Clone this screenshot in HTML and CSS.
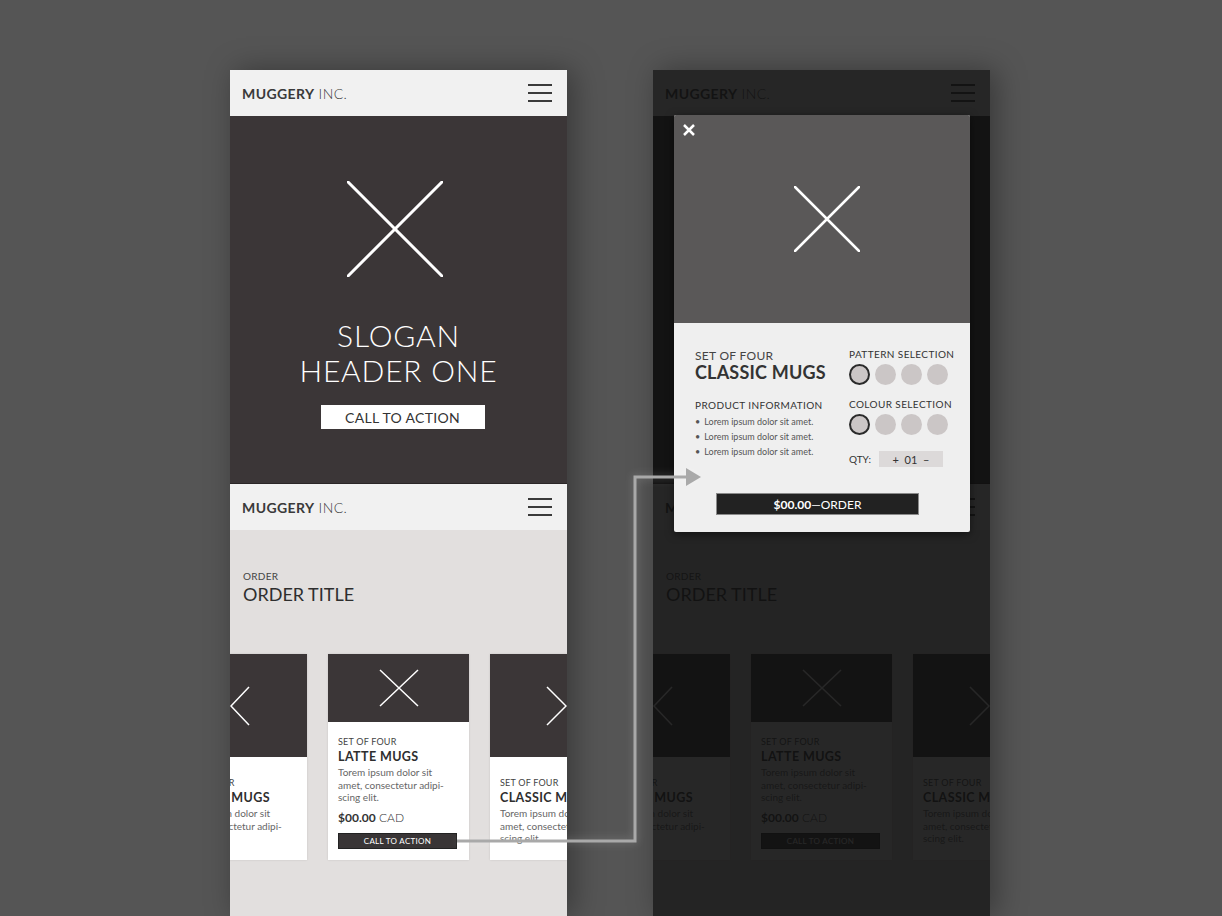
FILE: index.html
```html
<!DOCTYPE html>
<html lang="en">
<head>
  <meta charset="UTF-8" />
  <meta name="viewport" content="width=device-width, initial-scale=1.0"/>
  <title>Muggery Inc. Wireframes</title>
  <link rel="stylesheet" href="styles.css">
</head>
<body>

<div class="board">

  <!-- left screen -->
  <div class="phone">
    <div class="topbar">
      <div class="logo"><b>MUGGERY</b> INC.</div>
      <div class="burger"><span></span><span></span><span></span></div>
    </div>
    <div class="hero">
      <svg class="hero-x" width="96" height="96" viewBox="0 0 96 96"><path d="M1 1L95 95M95 1L1 95" stroke="#fff" stroke-width="3" stroke-linecap="round"/></svg>
      <h1 class="slogan">SLOGAN<br>HEADER ONE</h1>
      <div class="hero-btn">CALL TO ACTION</div>
    </div>
    <div class="topbar">
      <div class="logo"><b>MUGGERY</b> INC.</div>
      <div class="burger"><span></span><span></span><span></span></div>
    </div>
    <div class="order">
      <div class="eyebrow">ORDER</div>
      <div class="order-title">ORDER TITLE</div>
      <div class="cards">
        <div class="card side">
          <div class="card-img prev">
            <svg width="20" height="40" viewBox="0 0 20 40"><path d="M19 1L1 20L19 39" fill="none" stroke="#fff" stroke-width="1.5"/></svg>
          </div>
          <div class="card-body">
            <div class="kicker">SET OF FOUR</div>
            <div class="card-title">CLASSIC MUGS</div>
            <p class="card-text">Torem ipsum dolor sit amet, consectetur adipi-</p>
          </div>
        </div>
        <div class="card">
          <div class="card-img main">
            <svg width="40" height="38" viewBox="0 0 40 38"><path d="M1 1L39 37M39 1L1 37" stroke="#fff" stroke-width="1.5"/></svg>
          </div>
          <div class="card-body">
            <div class="kicker">SET OF FOUR</div>
            <div class="card-title">LATTE MUGS</div>
            <p class="card-text">Torem ipsum dolor sit amet, consectetur adipi-scing elit.</p>
            <div class="price"><b>$00.00</b> CAD</div>
            <div class="card-btn">CALL TO ACTION</div>
          </div>
        </div>
        <div class="card side">
          <div class="card-img next">
            <svg width="22" height="40" viewBox="0 0 22 40"><path d="M1 1L20 20L1 39" fill="none" stroke="#fff" stroke-width="1.5"/></svg>
          </div>
          <div class="card-body">
            <div class="kicker">SET OF FOUR</div>
            <div class="card-title">CLASSIC MUGS</div>
            <p class="card-text">Torem ipsum dolor sit amet, consectetur adipi-scing elit.</p>
          </div>
        </div>
      </div>
    </div>
  </div>

  <!-- right screen, same page dimmed with the product modal open -->
  <div class="phone dimmed">
    <div class="topbar">
      <div class="logo"><b>MUGGERY</b> INC.</div>
      <div class="burger"><span></span><span></span><span></span></div>
    </div>
    <div class="hero">
      <svg class="hero-x" width="96" height="96" viewBox="0 0 96 96"><path d="M1 1L95 95M95 1L1 95" stroke="#fff" stroke-width="3" stroke-linecap="round"/></svg>
      <h1 class="slogan">SLOGAN<br>HEADER ONE</h1>
      <div class="hero-btn">CALL TO ACTION</div>
    </div>
    <div class="topbar">
      <div class="logo"><b>MUGGERY</b> INC.</div>
      <div class="burger"><span></span><span></span><span></span></div>
    </div>
    <div class="order">
      <div class="eyebrow">ORDER</div>
      <div class="order-title">ORDER TITLE</div>
      <div class="cards">
        <div class="card side">
          <div class="card-img prev">
            <svg width="20" height="40" viewBox="0 0 20 40"><path d="M19 1L1 20L19 39" fill="none" stroke="#fff" stroke-width="1.5"/></svg>
          </div>
          <div class="card-body">
            <div class="kicker">SET OF FOUR</div>
            <div class="card-title">CLASSIC MUGS</div>
            <p class="card-text">Torem ipsum dolor sit amet, consectetur adipi-</p>
          </div>
        </div>
        <div class="card">
          <div class="card-img main">
            <svg width="40" height="38" viewBox="0 0 40 38"><path d="M1 1L39 37M39 1L1 37" stroke="#fff" stroke-width="1.5"/></svg>
          </div>
          <div class="card-body">
            <div class="kicker">SET OF FOUR</div>
            <div class="card-title">LATTE MUGS</div>
            <p class="card-text">Torem ipsum dolor sit amet, consectetur adipi-scing elit.</p>
            <div class="price"><b>$00.00</b> CAD</div>
            <div class="card-btn">CALL TO ACTION</div>
          </div>
        </div>
        <div class="card side">
          <div class="card-img next">
            <svg width="22" height="40" viewBox="0 0 22 40"><path d="M1 1L20 20L1 39" fill="none" stroke="#fff" stroke-width="1.5"/></svg>
          </div>
          <div class="card-body">
            <div class="kicker">SET OF FOUR</div>
            <div class="card-title">CLASSIC MUGS</div>
            <p class="card-text">Torem ipsum dolor sit amet, consectetur adipi-scing elit.</p>
          </div>
        </div>
      </div>
    </div>

    <div class="shade"></div>

    <div class="modal">
      <div class="modal-img">
        <svg class="close" width="14" height="14" viewBox="0 0 14 14"><path d="M2 2L12 12M12 2L2 12" stroke="#fff" stroke-width="2.5"/></svg>
        <svg class="modal-x" width="66" height="66" viewBox="0 0 66 66"><path d="M1 1L65 65M65 1L1 65" stroke="#fff" stroke-width="2.5" stroke-linecap="round"/></svg>
      </div>
      <div class="modal-info">
        <div class="info-left">
          <div class="m-kicker">SET OF FOUR</div>
          <div class="m-title">CLASSIC MUGS</div>
          <div class="m-label">PRODUCT INFORMATION</div>
          <ul class="m-list">
            <li>Lorem ipsum dolor sit amet.</li>
            <li>Lorem ipsum dolor sit amet.</li>
            <li>Lorem ipsum dolor sit amet.</li>
          </ul>
        </div>
        <div class="info-right">
          <div class="m-label">PATTERN SELECTION</div>
          <div class="swatches">
            <span class="on"></span><span></span><span></span><span></span>
          </div>
          <div class="m-label">COLOUR SELECTION</div>
          <div class="swatches">
            <span class="on"></span><span></span><span></span><span></span>
          </div>
          <div class="qty">QTY: <span class="qty-box">+&nbsp; 01 &nbsp;–</span></div>
        </div>
        <div class="order-btn"><b>$00.00</b>—ORDER</div>
      </div>
    </div>
  </div>

  <svg class="flow" width="1222" height="916" viewBox="0 0 1222 916">
    <path d="M457 841H635V477H687" fill="none" stroke="#a9a9a9" stroke-width="3"/>
    <path d="M686 468L701 477L686 486Z" fill="#a9a9a9"/>
  </svg>

</div>

</body>
</html>
```

FILE: styles.css
```css
html, body {
  margin: 0;
  height: 100%;
}

body {
  background: #555555;
  font-family: Lato, "Open Sans", sans-serif;
  color: #333;
  overflow: hidden;
}

.board {
  position: relative;
  display: flex;
  gap: 86px;
  padding: 70px 0 0 230px;
  height: 846px;
}

.phone {
  position: relative;
  width: 337px;
  height: 846px;
  overflow: hidden;
  background: #e2dfde;
  box-shadow: 6px 0 28px rgba(0,0,0,0.35);
}

.topbar {
  height: 46px;
  background: #f1f1f1;
  display: flex;
  align-items: center;
  justify-content: space-between;
  padding: 0 15px 0 12px;
}

.logo {
  font-size: 14px;
  letter-spacing: 0.4px;
  color: #3a3a3a;
  font-weight: 300;
}

.logo b {
  font-weight: 700;
}

.burger {
  width: 24px;
  display: flex;
  flex-direction: column;
  gap: 6px;
}

.burger span {
  height: 2px;
  background: #3a3a3a;
}

.hero {
  height: 368px;
  background: #3b3637;
  border-bottom: 1px solid #2a2627;
  display: flex;
  flex-direction: column;
  align-items: center;
  padding-top: 65px;
  box-sizing: border-box;
  color: #fff;
}

/* covered by the modal on the dimmed screen */
.dimmed .hero > * {
  visibility: hidden;
}

.hero-x {
  margin-right: 8px;
}

.slogan {
  margin: 41px 0 0;
  font-size: 30px;
  line-height: 35px;
  font-weight: 300;
  letter-spacing: 0.8px;
  text-align: center;
}

.hero-btn {
  margin: 17px 0 0 8px;
  width: 164px;
  height: 24px;
  background: #fff;
  color: #333;
  font-size: 14px;
  letter-spacing: 0.3px;
  display: flex;
  align-items: center;
  justify-content: center;
}

.order {
  padding: 40px 0 0 13px;
}

.eyebrow {
  font-size: 10px;
  color: #444;
  letter-spacing: 0.3px;
}

.order-title {
  font-size: 18px;
  color: #2e2e2e;
  margin-top: 1px;
}

.cards {
  display: flex;
  gap: 21px;
  margin: 49px 0 0 -77px;
}

.card {
  flex: 0 0 141px;
  height: 206px;
  background: #fff;
  box-shadow: 0 0 2px rgba(0,0,0,0.12);
}

.card-img {
  background: #3b3637;
  display: flex;
  align-items: center;
}

.card-img.main {
  height: 68px;
  justify-content: center;
}

.card-img.prev {
  height: 103px;
  padding-left: 64px;
}

.card-img.next {
  height: 103px;
  padding-left: 56px;
}

.card-body {
  padding: 14px 10px 0;
}

.side .card-body {
  padding-top: 20px;
}

.kicker {
  font-size: 9px;
  color: #444;
  letter-spacing: 0.2px;
}

.card-title {
  font-size: 12.5px;
  font-weight: 700;
  color: #2e2e2e;
  letter-spacing: 0.4px;
  margin-top: 2px;
}

.card-text {
  margin: 2px 0 0;
  font-size: 10px;
  line-height: 12.5px;
  color: #666;
  width: 112px;
}

.price {
  margin-top: 6px;
  font-size: 12px;
  color: #333;
  font-weight: 300;
}

.price b {
  font-weight: 700;
}

.card-btn {
  margin-top: 8px;
  width: 119px;
  height: 16px;
  box-sizing: border-box;
  background: #393536;
  border: 1px solid #222;
  color: #fff;
  font-size: 8px;
  letter-spacing: 0.3px;
  display: flex;
  align-items: center;
  justify-content: center;
}

.shade {
  position: absolute;
  inset: 0;
  background: rgba(15,15,15,0.9);
}

.modal {
  position: absolute;
  left: 21px;
  top: 45px;
  width: 296px;
  height: 417px;
  background: #efefef;
  border-radius: 2px;
  overflow: hidden;
  box-shadow: 0 2px 8px rgba(0,0,0,0.5);
}

.modal-img {
  position: relative;
  height: 208px;
  background: #5a5858;
  display: flex;
  align-items: center;
  justify-content: center;
}

.modal-x {
  margin-left: 10px;
}

.close {
  position: absolute;
  left: 8px;
  top: 8px;
}

.modal-info {
  display: grid;
  grid-template-columns: 154px 1fr;
  padding: 26px 0 0 21px;
}

.info-right {
  margin-top: -1px;
}

.m-kicker {
  font-size: 12px;
  line-height: 14px;
  color: #444;
  letter-spacing: 0.3px;
}

.m-title {
  font-size: 18px;
  font-weight: 700;
  color: #333;
  letter-spacing: 0.2px;
  line-height: 20px;
  margin-top: -1px;
}

.m-label {
  font-size: 10px;
  color: #333;
  letter-spacing: 0.4px;
}

.info-left .m-label {
  margin-top: 17px;
}

.m-list {
  list-style: none;
  margin: 3px 0 0;
  padding: 0;
  font-size: 9px;
  line-height: 15px;
  color: #555;
}

.m-list li::before {
  content: "•";
  margin-right: 4px;
}

.swatches {
  display: flex;
  gap: 5px;
  margin: 4px 0 13px;
}

.swatches span {
  width: 21px;
  height: 21px;
  border-radius: 50%;
  background: #cbc6c6;
  box-sizing: border-box;
}

.swatches span.on {
  border: 2px solid #2a2a2a;
}

.qty {
  display: flex;
  align-items: center;
  gap: 8px;
  font-size: 10px;
  color: #333;
  margin-top: 16px;
}

.qty-box {
  width: 64px;
  height: 16px;
  background: #dcd9d9;
  font-size: 11px;
  display: flex;
  align-items: center;
  justify-content: center;
}

.order-btn {
  grid-column: 1 / 3;
  margin: 26px 0 0 21px;
  width: 203px;
  height: 22px;
  box-sizing: border-box;
  background: #222;
  border: 1px solid #8a8a8a;
  color: #fff;
  font-size: 12px;
  display: flex;
  align-items: center;
  justify-content: center;
}

.flow {
  position: absolute;
  left: 0;
  top: 0;
  pointer-events: none;
  filter: drop-shadow(0 0 4px rgba(255,255,255,0.25));
}
```
